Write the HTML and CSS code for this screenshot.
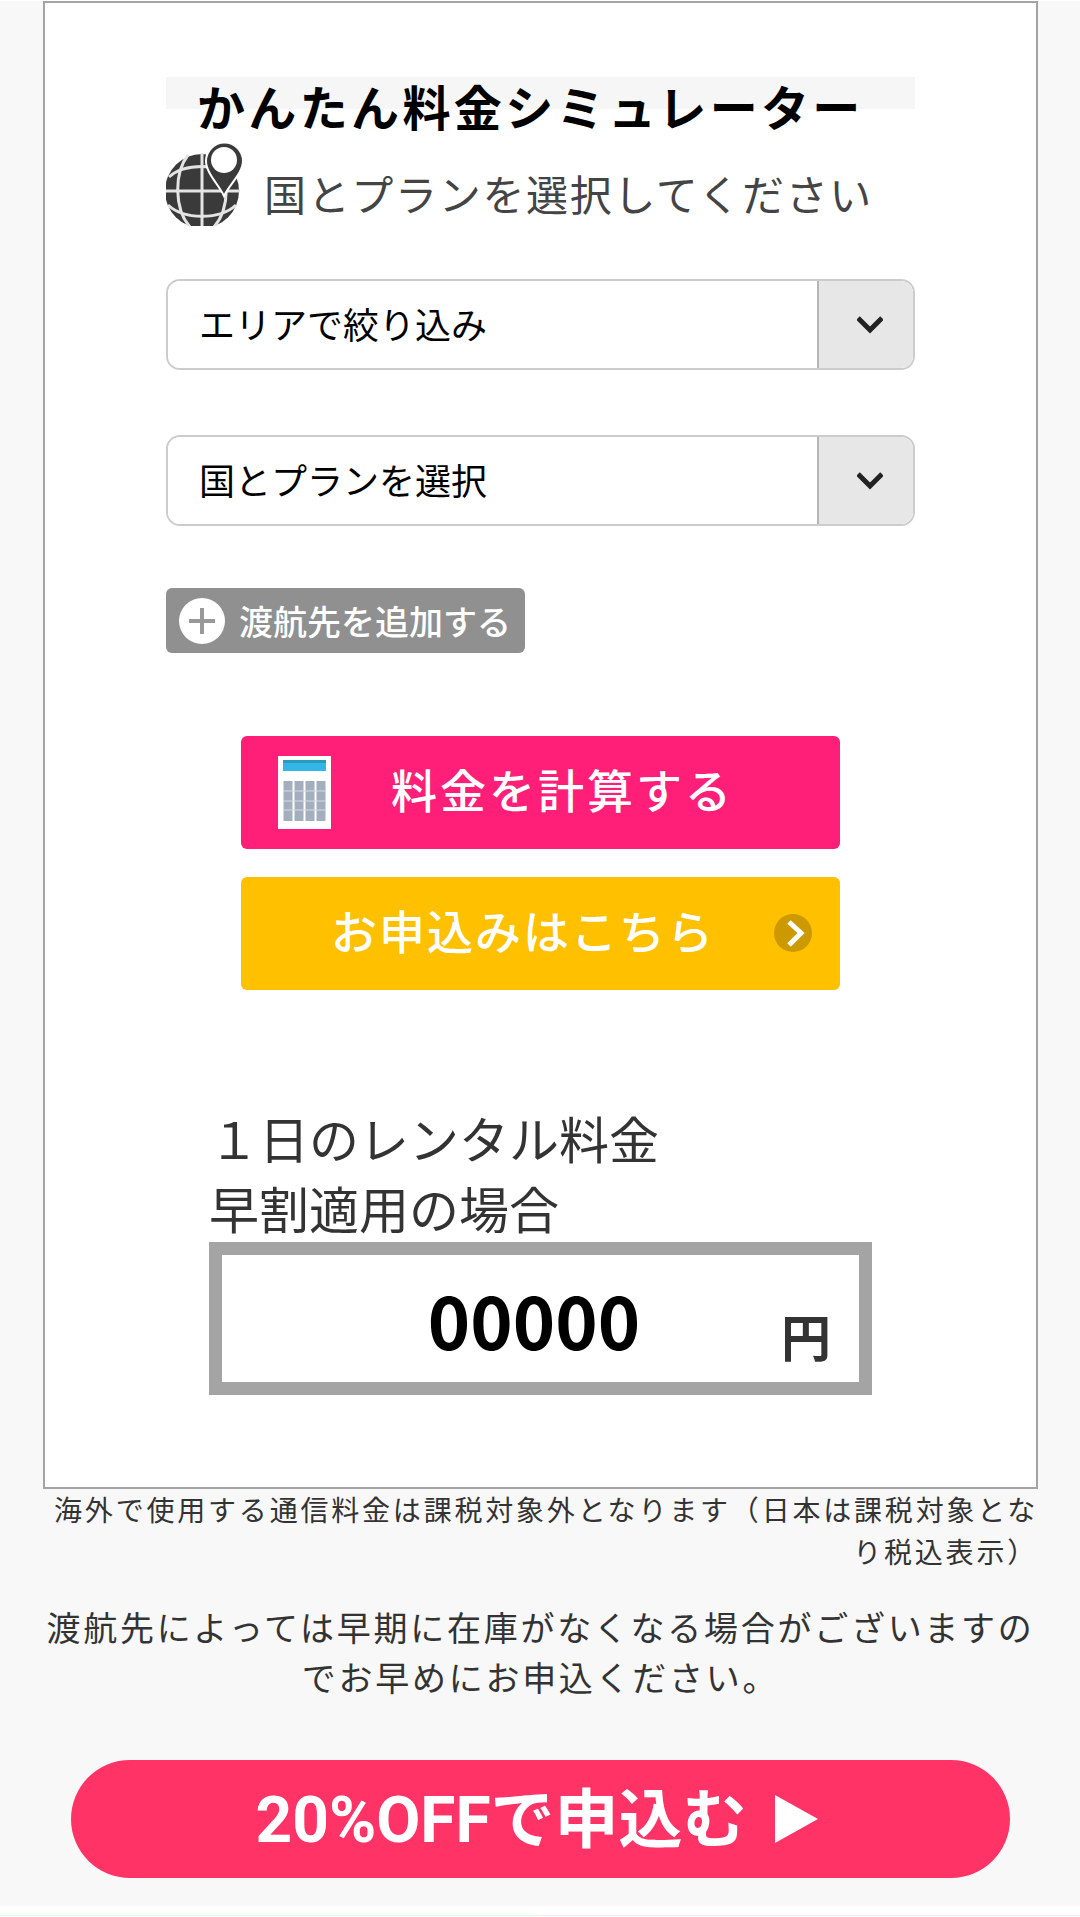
FILE: index.html
```html
<!DOCTYPE html>
<html lang="ja">
<head>
    <meta charset="UTF-8">
    <meta name="viewport" content="width=device-width, initial-scale=1.0">
    <title>かんたん料金シミュレーター</title>
    <link rel="stylesheet" href="styles.css">
</head>
<body>
    <main class="simulator-section">
        <form class="simulator">
            <h2 class="simulator-title">かんたん料金シミュレーター</h2>
            <div class="lead">
                <svg class="lead-icon" viewBox="0 0 77 83" aria-hidden="true">
                    <circle cx="36" cy="48" r="37" fill="#3a3a3a"/>
                    <g fill="none" stroke="#e4e4e4" stroke-width="3">
                        <path d="M36 10v73M0 48h74"/>
                        <path d="M22 12C8 30 8 66 24 84M50 12C64 30 64 66 48 84"/>
                        <path d="M3 34C18 20 54 20 69 34M2 62C18 77 54 77 70 62"/>
                    </g>
                    <path d="M58 53C53 42 40 30 40 18a18 18 0 0 1 37 0c0 12-14 24-19 35z" fill="#3a3a3a" stroke="#fff" stroke-width="2"/>
                    <circle cx="58" cy="17" r="13" fill="#fff"/>
                </svg>
                <p class="lead-text">国とプランを選択してください</p>
            </div>

            <div class="selects">
                <div class="select-box">
                    <select class="select" aria-label="エリアで絞り込み">
                        <option>エリアで絞り込み</option>
                    </select>
                    <span class="select-arrow">
                        <svg width="26" height="18" viewBox="0 0 26 18" aria-hidden="true"><path d="M1 2l12 12L25 2" fill="none" stroke="#222" stroke-width="5"/></svg>
                    </span>
                </div>
                <div class="select-box">
                    <select class="select" aria-label="国とプランを選択">
                        <option>国とプランを選択</option>
                    </select>
                    <span class="select-arrow">
                        <svg width="26" height="18" viewBox="0 0 26 18" aria-hidden="true"><path d="M1 2l12 12L25 2" fill="none" stroke="#222" stroke-width="5"/></svg>
                    </span>
                </div>
            </div>

            <button type="button" class="add-button">
                <svg width="46" height="46" viewBox="0 0 46 46" aria-hidden="true">
                    <circle cx="23" cy="23" r="23" fill="#fff"/>
                    <path d="M23 10v26M10 23h26" stroke="#999" stroke-width="4"/>
                </svg>
                渡航先を追加する
            </button>

            <div class="actions">
                <button type="button" class="action-button calculate-button">
                    <svg width="53" height="73" viewBox="0 0 53 73" aria-hidden="true">
                        <path fill="#fff" d="M0 0h53v73H0z"/>
                        <path fill="#33b5e5" d="M5 4h43v11H5z"/>
                        <path fill="#2a9abf" d="M5 4h43v3H5z"/>
                        <path d="M10 25v40M21 25v40M32 25v40M43 25v40" stroke="#a3afbf" stroke-width="9"/>
                        <path d="M5 35h43M5 45h43M5 54h43" stroke="#d5dae1" stroke-width="1"/>
                    </svg>
                    <span class="action-text">料金を計算する</span>
                </button>
                <button type="button" class="action-button apply-button">
                    <span class="action-text">お申込みはこちら</span>
                    <svg width="39" height="39" viewBox="0 0 39 39" aria-hidden="true">
                        <circle cx="19" cy="19" r="19" fill="#cc9a00"/>
                        <path d="M15 8l12 11-12 12" fill="none" stroke="#fff" stroke-width="5"/>
                    </svg>
                </button>
            </div>

            <div class="result">
                <p class="result-label">１日のレンタル料金<br>早割適用の場合</p>
                <div class="result-box">
                    <output class="result-price">00000</output>
                    <span class="result-unit">円</span>
                </div>
            </div>
        </form>

        <p class="tax-note">海外で使用する通信料金は課税対象外となります（日本は課税対象となり税込表示）</p>
        <p class="stock-note">渡航先によっては早期に在庫がなくなる場合がございますのでお早めにお申込ください。</p>

        <a href="#" class="cta">
            <span class="action-text">20%OFFで申込む</span>
            <svg width="43" height="48" viewBox="0 0 43 48" aria-hidden="true"><path d="M0 0l43 24L0 48z" fill="#fff"/></svg>
        </a>
    </main>
    <div class="bottom-line"></div>
</body>
</html>
```
FILE: styles.css
```css
* {
    margin: 0;
    padding: 0;
    box-sizing: border-box;
}

body {
    background: #fff;
    color: #333;
    font-family: Roboto, "Noto Sans CJK JP", sans-serif;
    padding-top: 1px;
}

button,
select {
    font-family: inherit;
}

.simulator-section {
    background: #f8f8f8;
    padding: 0 42px 28px 43px;
}

.simulator {
    background: #fff;
    border: 2px solid #a4a4a4;
    padding: 74px 121px 92px;
}

.simulator-title {
    background: linear-gradient(#f6f6f6, #f6f6f6) no-repeat 0 0 / 100% 32px;
    color: #000;
    font-size: 48px;
    line-height: 66px;
    letter-spacing: 0.07em;
    padding-left: 31px;
    white-space: nowrap;
}

.lead {
    display: flex;
    align-items: flex-end;
    gap: 21px;
    margin-bottom: 53px;
}

.lead-icon {
    width: 77px;
    height: 83px;
    flex: none;
}

.lead-text {
    color: #444;
    font-size: 42px;
    line-height: 58px;
    letter-spacing: 0.04em;
    white-space: nowrap;
}

/* セレクト */
.selects {
    display: flex;
    flex-direction: column;
    gap: 65px;
    margin-bottom: 62px;
}

.select-box {
    display: flex;
    position: relative;
    height: 91px;
    border: 2px solid #ccc;
    border-radius: 14px;
    overflow: hidden;
}

.select {
    appearance: none;
    flex: 1;
    width: 100%;
    border: none;
    background: #fff;
    color: #000;
    font-size: 36px;
    padding: 4px 110px 0 31px;
}

.select-arrow {
    position: absolute;
    top: 0;
    right: 0;
    bottom: 0;
    width: 96px;
    display: flex;
    align-items: center;
    justify-content: center;
    padding-left: 8px;
    border-left: 2px solid #b5b5b5;
    background: #e7e7e7;
    pointer-events: none;
}

.add-button {
    display: flex;
    align-items: center;
    gap: 14px;
    height: 65px;
    padding: 0 14px 0 13px;
    border: none;
    border-radius: 6px;
    background: #909090;
    color: #fff;
    font-size: 34px;
    font-weight: 500;
    cursor: pointer;
}

.actions {
    display: flex;
    flex-direction: column;
    gap: 28px;
    width: 80%;
    margin: 83px auto 117px;
}

.action-button {
    display: flex;
    align-items: center;
    height: 113px;
    border: none;
    border-radius: 6px;
    color: #fff;
    font-size: 46px;
    font-weight: 500;
    cursor: pointer;
}

.action-text {
    padding-bottom: 10px;
}

.calculate-button {
    background: #ff1f78;
    gap: 60px;
    padding-left: 37px;
    letter-spacing: 3px;
}

.apply-button {
    background: #ffc000;
    justify-content: space-between;
    padding: 0 27px 0 90px;
    letter-spacing: 2px;
}

/* 計算結果 */
.result {
    padding: 0 43px;
}

.result-label {
    font-size: 50px;
    line-height: 70px;
    margin-bottom: -5px;
}

.result-box {
    display: flex;
    align-items: center;
    height: 153px;
    border: 13px solid #a4a4a4;
    padding: 0 28px 0 65px;
    font-family: "Noto Sans CJK JP", sans-serif;
    font-weight: 700;
}

.result-price {
    flex: 1;
    color: #000;
    font-size: 72px;
    text-align: center;
}

.result-unit {
    font-size: 50px;
    line-height: 50px;
    padding-top: 32px;
}

.tax-note {
    font-size: 28px;
    line-height: 42px;
    letter-spacing: 0.1em;
    text-align: right;
    padding-top: 2px;
    margin-bottom: 29px;
}

.stock-note {
    font-size: 34px;
    line-height: 50px;
    letter-spacing: 0.08em;
    text-align: center;
    margin-bottom: 56px;
}

.cta {
    display: flex;
    align-items: center;
    justify-content: center;
    gap: 28px;
    height: 118px;
    margin: 0 28px;
    padding-right: 8px;
    border-radius: 60px;
    background: #ff3366;
    color: #fff;
    font-size: 64px;
    font-weight: 700;
    text-decoration: none;
}

.bottom-line {
    height: 1px;
    margin-top: 9px;
    background: linear-gradient(90deg, #e3ffe3 50%, #ffe9ec 50%);
}
```
